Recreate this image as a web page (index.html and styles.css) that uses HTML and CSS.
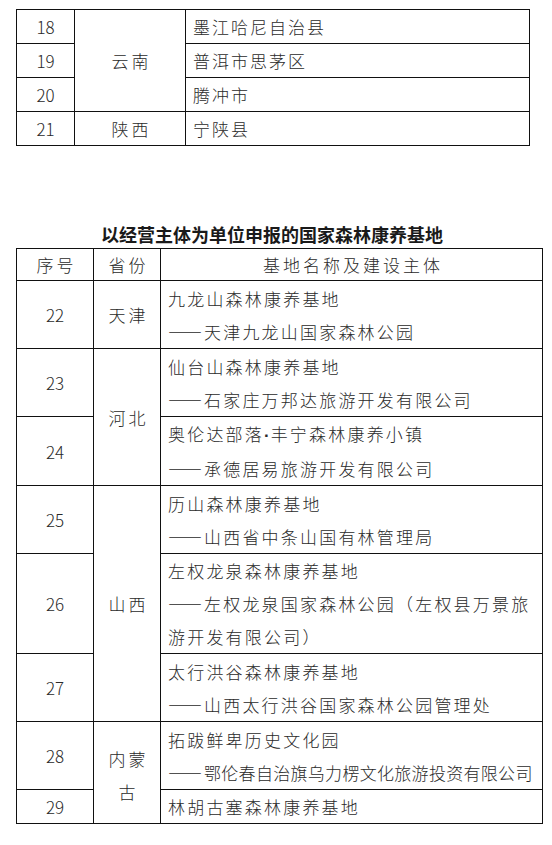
FILE: index.html
```html
<!DOCTYPE html>
<html lang="zh-CN">
<head>
<meta charset="utf-8">
<title>国家森林康养基地</title>
<link rel="stylesheet" href="styles.css">
</head>
<body>
<div class="page">
  <table class="grid grid-top">
    <colgroup><col class="c1"><col class="c2"><col class="c3"></colgroup>
    <tr class="r1"><td class="num">18</td><td class="prov" rowspan="3">云南</td><td class="name">墨江哈尼自治县</td></tr>
    <tr class="r1"><td class="num">19</td><td class="name">普洱市思茅区</td></tr>
    <tr class="r1"><td class="num">20</td><td class="name">腾冲市</td></tr>
    <tr class="r1"><td class="num">21</td><td class="prov">陕西</td><td class="name">宁陕县</td></tr>
  </table>

  <h2 class="title">以经营主体为单位申报的国家森林康养基地</h2>

  <table class="grid grid-main">
    <colgroup><col class="m1"><col class="m2"><col class="m3"></colgroup>
    <tr class="head"><td>序号</td><td>省份</td><td>基地名称及建设主体</td></tr>
    <tr class="r2"><td class="num">22</td><td class="prov">天津</td><td class="name">九龙山森林康养基地<br><span class="dash">——</span>天津九龙山国家森林公园</td></tr>
    <tr class="r2"><td class="num">23</td><td class="prov" rowspan="2">河北</td><td class="name">仙台山森林康养基地<br><span class="dash">——</span>石家庄万邦达旅游开发有限公司</td></tr>
    <tr class="r2"><td class="num">24</td><td class="name">奥伦达部落<span class="dot">·</span>丰宁森林康养小镇<br><span class="dash">——</span>承德居易旅游开发有限公司</td></tr>
    <tr class="r2"><td class="num">25</td><td class="prov" rowspan="3">山西</td><td class="name">历山森林康养基地<br><span class="dash">——</span>山西省中条山国有林管理局</td></tr>
    <tr class="r3"><td class="num">26</td><td class="name">左权龙泉森林康养基地<br><span class="dash">——</span>左权龙泉国家森林公园（左权县万景旅<br>游开发有限公司）</td></tr>
    <tr class="r2"><td class="num">27</td><td class="name">太行洪谷森林康养基地<br><span class="dash">——</span>山西太行洪谷国家森林公园管理处</td></tr>
    <tr class="r2"><td class="num">28</td><td class="prov low" rowspan="2">内蒙<br>古</td><td class="name">拓跋鲜卑历史文化园<br><span class="tight"><span class="dash">——</span>鄂伦春自治旗乌力楞文化旅游投资有限公司</span></td></tr>
    <tr class="r1"><td class="num">29</td><td class="name">林胡古塞森林康养基地</td></tr>
  </table>
</div>
</body>
</html>
```

FILE: styles.css
```css
html, body {
  margin: 0;
  padding: 0;
  background: #ffffff;
}

.page {
  padding: 9px 0 0 16px;
  font-family: "Noto Sans CJK SC", "Noto Sans", sans-serif;
  font-weight: 300;
  color: #2a2a2a;
}

.grid {
  border-collapse: collapse;
  table-layout: fixed;
}

.grid td {
  border: 1px solid #111;
  padding: 0;
  font-size: 17px;
  line-height: 33px;
  letter-spacing: 2.2px;
  white-space: nowrap;
  vertical-align: middle;
}

.grid .head { height: 32px; }
.grid .head td { line-height: 31px; }
.grid .r1 { height: 34px; }
.grid .r2 { height: 68px; }
.grid .r3 { height: 100px; }

.grid-top { width: 513px; }
.grid-top .c1 { width: 58px; }
.grid-top .c2 { width: 111px; }
.grid-top .c3 { width: 344px; }
.grid-top td { letter-spacing: 2px; }

.grid-main { width: 526px; }
.grid-main .m1 { width: 77px; }
.grid-main .m2 { width: 67px; }
.grid-main .m3 { width: 382px; }

.grid td.num {
  text-align: center;
  letter-spacing: 0;
}

.grid td.prov {
  text-align: center;
  padding-left: 3px;
  letter-spacing: 3px;
}

.grid td.low {
  padding-top: 4px;
}

.grid td.name {
  padding-left: 7px;
  text-align: left;
}

.grid .head td {
  text-align: center;
  padding-left: 3px;
  letter-spacing: 3px;
}

.dash {
  letter-spacing: 0;
  margin-right: 2px;
}

.dot {
  font-family: "Liberation Sans", sans-serif;
  font-weight: 700;
  letter-spacing: 1px;
}

.tight { letter-spacing: 0.3px; }

.title {
  margin: 77px 0 0;
  width: 512px;
  height: 25px;
  text-align: center;
  font-size: 18px;
  line-height: 22px;
  font-weight: 700;
  letter-spacing: 0;
  color: #1a1a1a;
}
```
